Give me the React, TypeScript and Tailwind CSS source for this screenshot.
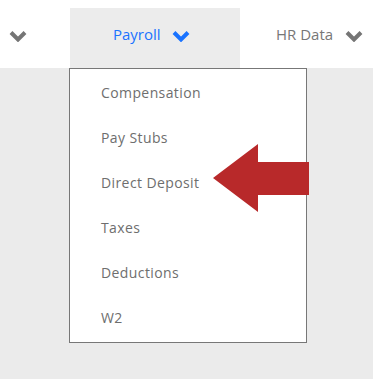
import React from 'react'

const Chevron: React.FC<{ color: string }> = ({ color }) => (
  <svg width="18" height="12" viewBox="0 0 18 12" className="shrink-0">
    <path d="M2 2.5 L9 9.5 L16 2.5" fill="none" stroke={color} strokeWidth="4" />
  </svg>
)

const items = ['Compensation', 'Pay Stubs', 'Direct Deposit', 'Taxes', 'Deductions', 'W2']

const App: React.FC = () => {
  return (
    <div
      className="relative w-full h-[379px] bg-[#ebebeb] overflow-hidden"
      style={{ fontFamily: '"Open Sans", "Liberation Sans", sans-serif' }}
    >
      {/* top nav */}
      <div className="h-[68px] bg-white flex items-end">
        <div className="w-[70px] h-[60px] flex items-start pt-[22px] pl-[9px]">
          <Chevron color="#757575" />
        </div>
        <div className="w-[170px] h-[60px] bg-[#ececec] flex items-start pt-[15px] pl-[43px]">
          <span className="text-[15px] leading-[22px] text-[#1a73ff]">Payroll</span>
          <span className="ml-[11px] mt-[7px]">
            <Chevron color="#1a73ff" />
          </span>
        </div>
        <div className="flex-1 h-[60px] flex items-start pt-[15px] pl-[36px]">
          <span className="text-[15px] leading-[22px] text-[#777]">HR Data</span>
          <span className="ml-[12px] mt-[7px]">
            <Chevron color="#757575" />
          </span>
        </div>
      </div>

      {/* dropdown */}
      <div className="ml-[69px] w-[238px] h-[275px] bg-white border border-[#777] pt-[1px]">
        {items.map((item) => (
          <div key={item} className="h-[45px] flex items-center pl-[31px]">
            <span className="text-[14px] tracking-[0.4px] text-[#6e6e6e]">{item}</span>
          </div>
        ))}
      </div>

      {/* pointer arrow */}
      <svg
        className="absolute left-[213px] top-[144px]"
        width="96"
        height="68"
        viewBox="0 0 96 68"
      >
        <polygon points="0,34 45,0 45,18 96,18 96,51 45,51 45,68" fill="#b8292a" />
      </svg>
    </div>
  )
}

export default App
